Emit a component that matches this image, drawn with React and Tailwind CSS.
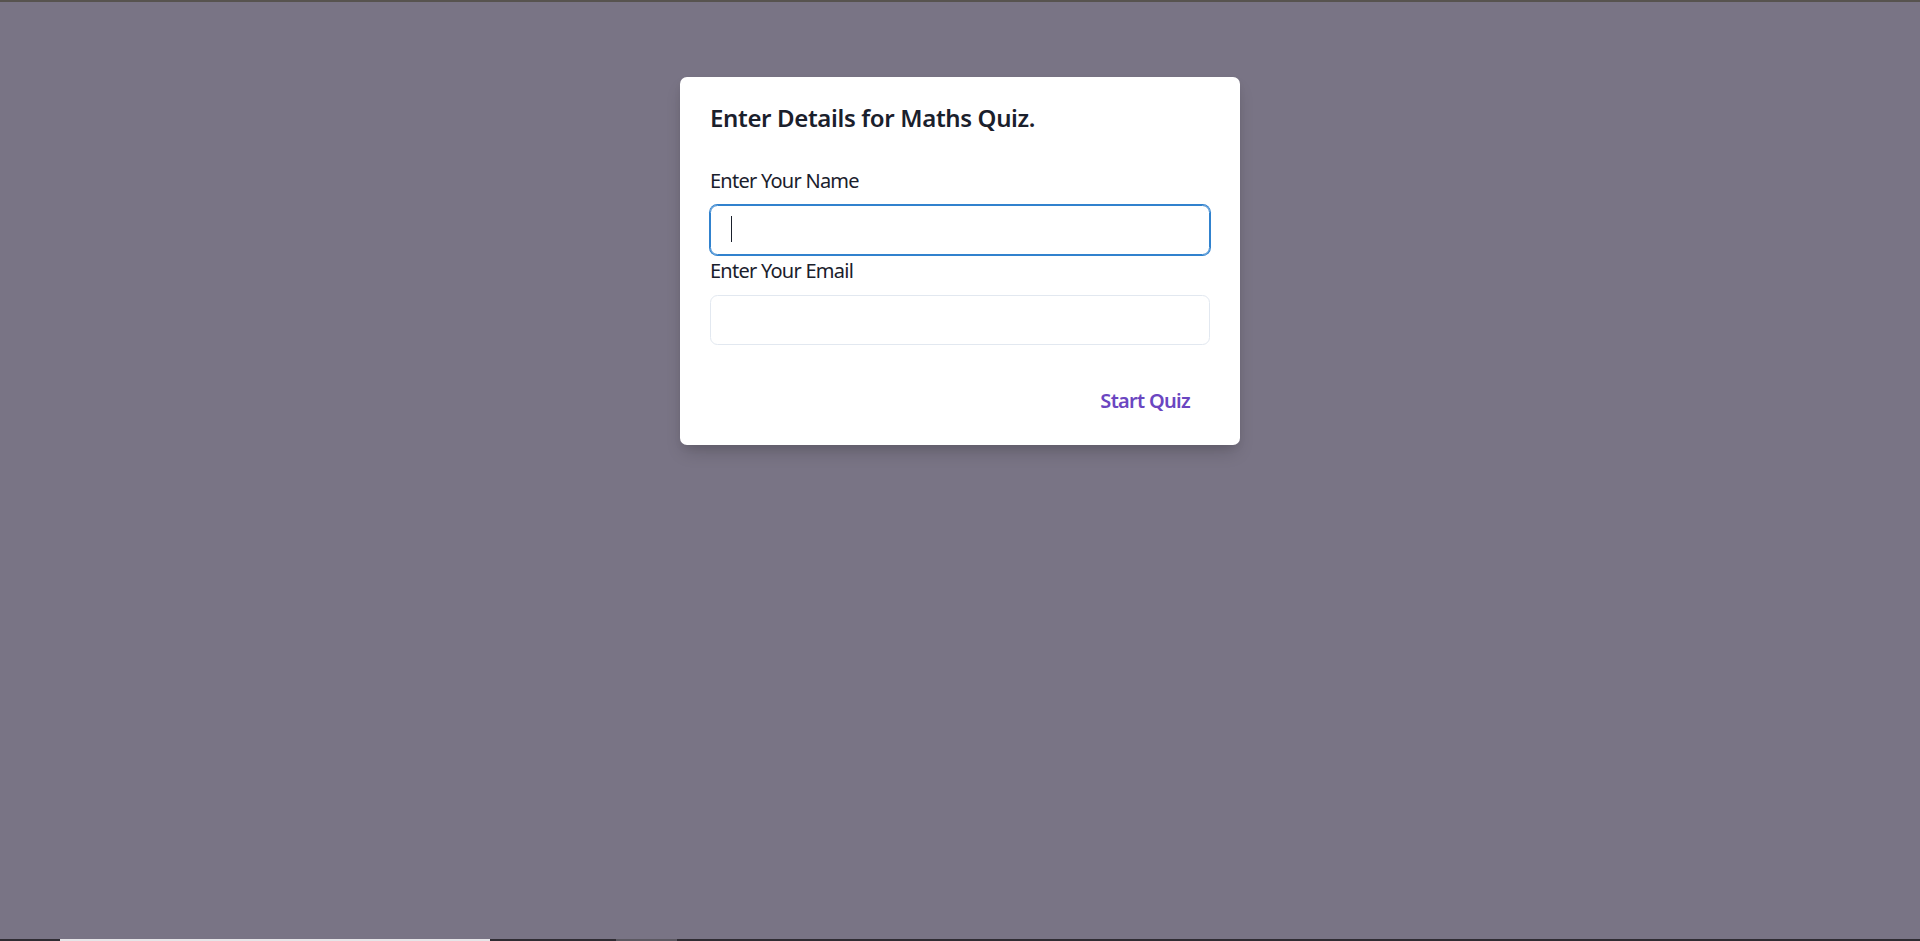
import React, { useState } from 'react'

const font = { fontFamily: '"Noto Sans", "Open Sans", sans-serif' }

const App = () => {
  const [name, setName] = useState('')
  const [email, setEmail] = useState('')

  return (
    <div className="h-screen flex flex-col bg-[#797485] overflow-hidden" style={font}>
      <div className="h-[2px] bg-[#57534f]"></div>

      <div className="flex-1 flex justify-center">
        <div className="mt-[75px] w-[560px] self-start bg-white rounded-[7px] shadow-[0_10px_18px_-4px_rgba(0,0,0,0.18),0_4px_8px_-2px_rgba(0,0,0,0.08)]">
          <header className="px-[30px] pt-[22px] pb-[18px] text-[24px] leading-[37.5px] font-semibold text-[#1a202c] tracking-[-0.35px]">
            Enter Details for Maths Quiz.
          </header>

          <div className="px-[30px] py-[10px]">
            <label className="block text-[20px] leading-[30px] pt-[1px] mb-[9px] text-[#1a202c] tracking-[-0.75px]">Enter Your Name</label>
            <div className="relative">
              <input
                value={name}
                onChange={(e) => setName(e.target.value)}
                className="w-full h-[50px] px-[20px] rounded-[7.5px] border border-[#3182ce] shadow-[0_0_0_1px_#3182ce] outline-none text-[20px] text-[#1a202c]"
              />
              {name === '' && <div className="absolute left-[21px] top-[11px] w-[1px] h-[26px] bg-[#1a202c]"></div>}
            </div>

            <label className="block text-[20px] leading-[30px] pt-[1px] mb-[9px] text-[#1a202c] tracking-[-0.75px]">Enter Your Email</label>
            <input
              value={email}
              onChange={(e) => setEmail(e.target.value)}
              className="w-full h-[50px] px-[20px] rounded-[7.5px] border border-[#e2e8f0] outline-none text-[20px] text-[#1a202c]"
            />
          </div>

          <footer className="flex justify-end px-[30px] py-[20px]">
            <button className="h-[50px] px-[20px] pt-[2px] rounded-[7.5px] text-[20px] font-semibold text-[#6b46c1] tracking-[-0.7px] hover:bg-[#faf5ff]">
              Start Quiz
            </button>
          </footer>
        </div>
      </div>

      <div className="h-[2px] flex">
        <div className="w-[60px] bg-[#2f2c33]"></div>
        <div className="w-[430px] bg-[#e6e5e8]"></div>
        <div className="w-[126px] bg-[#2f2c33]"></div>
        <div className="w-[61px] bg-[#5b5861]"></div>
        <div className="flex-1 bg-[#2f2c33]"></div>
      </div>
    </div>
  )
}

export default App
